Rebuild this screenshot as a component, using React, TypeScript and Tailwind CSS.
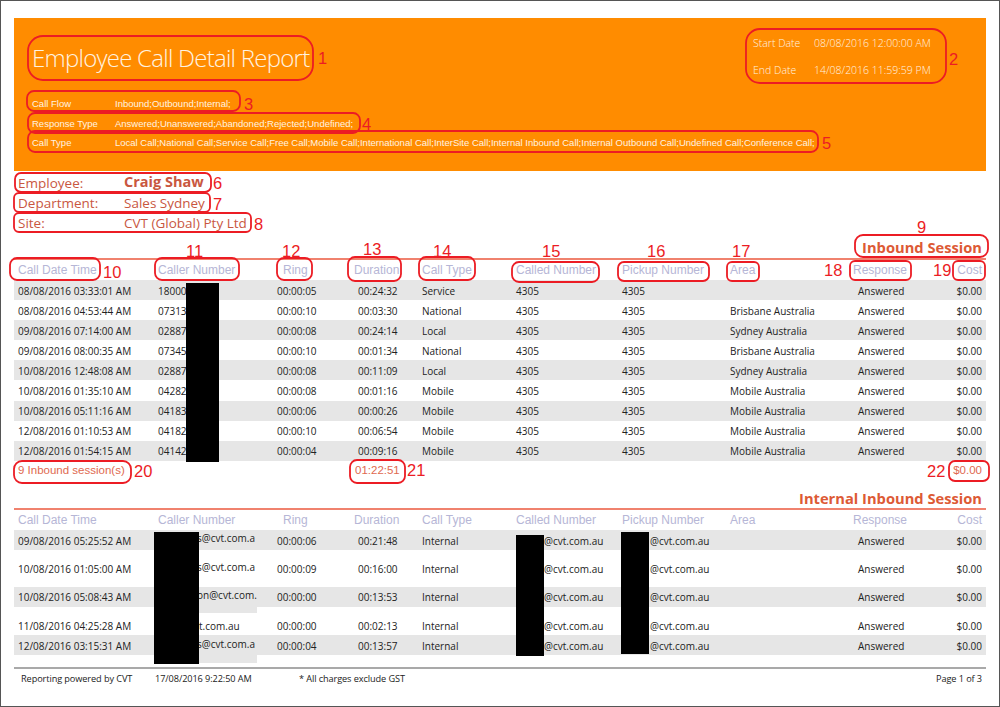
const GRID =
  "grid grid-cols-[140px_103px_77px_84px_94px_106px_108px_124px_95px_40px]";

const INBOUND = [
  ["08/08/2016 03:33:01 AM", "18000", "00:00:05", "00:24:32", "Service", "4305", "4305", ""],
  ["08/08/2016 04:53:44 AM", "07313", "00:00:10", "00:03:30", "National", "4305", "4305", "Brisbane Australia"],
  ["09/08/2016 07:14:00 AM", "02887", "00:00:08", "00:24:14", "Local", "4305", "4305", "Sydney Australia"],
  ["09/08/2016 08:00:35 AM", "07345", "00:00:10", "00:01:34", "National", "4305", "4305", "Brisbane Australia"],
  ["10/08/2016 12:48:08 AM", "02887", "00:00:08", "00:11:09", "Local", "4305", "4305", "Sydney Australia"],
  ["10/08/2016 01:35:10 AM", "04282", "00:00:08", "00:01:16", "Mobile", "4305", "4305", "Mobile Australia"],
  ["10/08/2016 05:11:16 AM", "04183", "00:00:06", "00:00:26", "Mobile", "4305", "4305", "Mobile Australia"],
  ["12/08/2016 01:10:53 AM", "04182", "00:00:10", "00:06:54", "Mobile", "4305", "4305", "Mobile Australia"],
  ["12/08/2016 01:54:15 AM", "04142", "00:00:04", "00:09:16", "Mobile", "4305", "4305", "Mobile Australia"],
];

const INTERNAL = [
  { date: "09/08/2016 05:25:52 AM", caller: "s@cvt.com.a", ring: "00:00:06", dur: "00:21:48", row: "h-[20px] pt-[3px] bg-[#e6e6e6]", inset: "pl-[43px] -mt-[5px]" },
  { date: "10/08/2016 01:05:00 AM", caller: "s@cvt.com.a", ring: "00:00:09", dur: "00:16:00", row: "h-[37px] pt-[2px]", inset: "pl-[43px] -mt-[4px]" },
  { date: "10/08/2016 05:08:43 AM", caller: "on@cvt.com.", ring: "00:00:00", dur: "00:13:53", row: "h-[20px] pt-[2px] bg-[#e6e6e6]", inset: "pl-[43px] -mt-[4px]", tail: "h-[8px]" },
  { date: "11/08/2016 04:25:28 AM", caller: "vt.com.au", ring: "00:00:00", dur: "00:02:13", row: "h-[28px] pt-[11px]", inset: "pl-[40px]" },
  { date: "12/08/2016 03:15:31 AM", caller: "s@cvt.com.a", ring: "00:00:04", dur: "00:13:57", row: "h-[20px] pt-[3px] bg-[#e6e6e6]", inset: "pl-[43px] -mt-[4px]", tail: "h-[9px]" },
];

const REDACTIONS = [
  "left-[185px] top-[282px] w-[33px] h-[179px]",
  "left-[153px] top-[531px] w-[45px] h-[132px]",
  "left-[515px] top-[534px] w-[28px] h-[121px]",
  "left-[620px] top-[531px] w-[28px] h-[122px]",
];

// hand drawn marks on top of the report: x, y, w, h, corner radius
const MARKS = [
  [28, 36, 285, 44, 15], [746, 29, 200, 54, 14], [27, 91, 213, 20, 7], [28, 113, 332, 20, 7],
  [28, 131, 790, 21, 7], [15, 173, 196, 19, 6], [14, 193, 196, 19, 5], [14, 213, 237, 19, 5],
  [855, 235, 133, 22, 8], [10, 258, 90, 22, 7], [155, 258, 84, 22, 7], [277, 258, 35, 22, 7],
  [348, 257, 53, 24, 7], [419, 257, 56, 23, 7], [512, 262, 87, 20, 7], [618, 262, 91, 19, 6],
  [727, 262, 32, 19, 5], [850, 261, 61, 19, 5], [953, 261, 32, 19, 5], [14, 461, 117, 22, 8],
  [350, 460, 55, 23, 7], [949, 461, 40, 20, 6],
];

const LABELS: [string, number, number][] = [
  ["1", 318, 64], ["2", 949, 65], ["3", 244, 110], ["4", 362, 130], ["5", 822, 149],
  ["6", 213, 189], ["7", 213, 210], ["8", 254, 230], ["9", 917, 233], ["10", 103, 278],
  ["11", 186, 257], ["12", 282, 257], ["13", 363, 255], ["14", 433, 257], ["15", 542, 257],
  ["16", 647, 257], ["17", 732, 257], ["18", 824, 276], ["19", 933, 276], ["20", 134, 477],
  ["21", 407, 476], ["22", 927, 477],
];

function Heading({ children, leading }: { children: string; leading: string }) {
  return (
    <div className={`h-[22px] pr-[4px] text-right text-[14.7px] font-bold text-[#dd5a35] ${leading}`}>
      {children}
    </div>
  );
}

function TableHead() {
  return (
    <div className={`${GRID} h-[22px] items-center border-t-2 border-[#f0826e] font-['Liberation_Sans',sans-serif] text-[12px] text-[#b6b6d6]`}>
      <span className="pl-[4px]">Call Date Time</span>
      <span className="pl-[4px]">Caller Number</span>
      <span className="pl-[26px]">Ring</span>
      <span className="pl-[20px]">Duration</span>
      <span className="pl-[4px]">Call Type</span>
      <span className="pl-[4px]">Called Number</span>
      <span className="pl-[4px]">Pickup Number</span>
      <span className="pl-[4px]">Area</span>
      <span className="pl-[3px]">Response</span>
      <span className="pr-[3px] text-right">Cost</span>
    </div>
  );
}

function App() {
  return (
    <div className="relative h-[707px] w-[1000px] overflow-hidden border border-[#555555] bg-white px-[13px] pt-[17px] font-['Open_Sans',sans-serif]">
      <header className="flex h-[153px] flex-col bg-[#ff8c00] pl-[18px] text-[#fff3e0]">
        <div className="flex h-[76px] justify-between">
          <h1 className="mt-[20px] h-[40px] text-[24px] leading-[40px] font-light tracking-[-0.75px]">
            Employee Call Detail Report
          </h1>
          <div className="w-[233px] pt-[16px] text-[10.5px] font-light">
            <div className="grid h-[20px] grid-cols-[61px_auto] items-center">
              <span>Start Date</span>
              <span>08/08/2016 12:00:00 AM</span>
            </div>
            <div className="mt-[7px] grid h-[20px] grid-cols-[61px_auto] items-center">
              <span>End Date</span>
              <span>14/08/2016 11:59:59 PM</span>
            </div>
          </div>
        </div>
        <div className="font-['Liberation_Sans',sans-serif] text-[9.5px]">
          <div className="grid h-[20px] grid-cols-[83px_auto] items-center">
            <span>Call Flow</span>
            <span>Inbound;Outbound;Internal;</span>
          </div>
          <div className="grid h-[19.5px] grid-cols-[83px_auto] items-center">
            <span>Response Type</span>
            <span>Answered;Unanswered;Abandoned;Rejected;Undefined;</span>
          </div>
          <div className="grid h-[19.5px] grid-cols-[83px_auto] items-center whitespace-nowrap">
            <span>Call Type</span>
            <span>
              Local Call;National Call;Service Call;Free Call;Mobile Call;International Call;InterSite Call;Internal Inbound Call;Internal Outbound Call;Undefined Call;Conference Call;
            </span>
          </div>
        </div>
      </header>

      <section className="mt-[2px] text-[13.5px] text-[#c9573f]">
        <div className="grid h-[20px] grid-cols-[106px_auto] items-center pl-[4px]">
          <span>Employee:</span>
          <span className="-mt-[2px] text-[14.5px] font-bold">Craig Shaw</span>
        </div>
        <div className="grid h-[20px] grid-cols-[106px_auto] items-center pl-[4px]">
          <span>Department:</span>
          <span>Sales Sydney</span>
        </div>
        <div className="grid h-[20px] grid-cols-[106px_auto] items-center pl-[4px]">
          <span>Site:</span>
          <span>CVT (Global) Pty Ltd</span>
        </div>
      </section>

      <section className="mt-[3px]">
        <Heading leading="leading-[22px]">Inbound Session</Heading>
        <TableHead />
        <div className="text-[10px] text-[#222222]">
          {INBOUND.map((r, i) => (
            <div key={r[0]} className={`${GRID} h-[20.1px] items-center pt-[2px] ${i % 2 === 0 ? "bg-[#e6e6e6]" : ""}`}>
              <span className="pl-[4px]">{r[0]}</span>
              <span className="pl-[4px]">{r[1]}</span>
              <span className="pl-[20px]">{r[2]}</span>
              <span className="pl-[24px]">{r[3]}</span>
              <span className="pl-[4px]">{r[4]}</span>
              <span className="pl-[4px]">{r[5]}</span>
              <span className="pl-[4px]">{r[6]}</span>
              <span className="pl-[4px]">{r[7]}</span>
              <span className="pl-[8px]">Answered</span>
              <span className="pr-[3px] text-right">$0.00</span>
            </div>
          ))}
        </div>
        <div className={`${GRID} h-[20px] items-center font-['Liberation_Sans',sans-serif] text-[11.5px] text-[#e0694f]`}>
          <span className="col-span-3 pl-[4px]">9 Inbound session(s)</span>
          <span className="pl-[21px]">01:22:51</span>
          <span className="col-start-10 pr-[3px] text-right">$0.00</span>
        </div>
      </section>

      <section className="mt-[5px]">
        <Heading leading="leading-[24px]">Internal Inbound Session</Heading>
        <TableHead />
        <div className="text-[10px] text-[#222222]">
          {INTERNAL.map((r) => (
            <div key={r.date} className={`${GRID} ${r.row} items-center`}>
              <span className="pl-[4px]">{r.date}</span>
              <span className={`relative whitespace-nowrap ${r.inset}`}>
                {r.caller}
                {r.tail && <span className={`absolute left-0 top-[17px] w-full bg-[#e6e6e6] ${r.tail}`} />}
              </span>
              <span className="pl-[20px]">{r.ring}</span>
              <span className="pl-[24px]">{r.dur}</span>
              <span className="pl-[4px]">Internal</span>
              <span className="pl-[32px]">@cvt.com.au</span>
              <span className="pl-[32px]">@cvt.com.au</span>
              <span />
              <span className="pl-[8px]">Answered</span>
              <span className="pr-[3px] text-right">$0.00</span>
            </div>
          ))}
        </div>
      </section>

      <footer className="mt-[12px] flex h-[21px] items-center border-t-2 border-[#a9a9a9] pt-[1px] text-[9.2px] tracking-[-0.1px] text-[#222222]">
        <span className="w-[141px] pl-[7px]">Reporting powered by CVT</span>
        <span className="w-[144px]">17/08/2016 9:22:50 AM</span>
        <span>* All charges exclude GST</span>
        <span className="ml-auto pr-[4px]">Page 1 of 3</span>
      </footer>

      {REDACTIONS.map((c) => (
        <div key={c} className={`absolute bg-black ${c}`} />
      ))}

      <svg className="absolute -left-px -top-px" width="1000" height="707" fill="none">
        {MARKS.map(([x, y, w, h, r]) => (
          <rect key={`${x}-${y}`} x={x} y={y} width={w} height={h} rx={r} stroke="#ec1c24" strokeWidth="1.8" />
        ))}
        {LABELS.map(([t, x, y]) => (
          <text key={t} x={x} y={y} fill="#ec1c24" fontSize="16.5" fontFamily="'Liberation Sans', sans-serif">
            {t}
          </text>
        ))}
      </svg>
    </div>
  );
}

export default App;
